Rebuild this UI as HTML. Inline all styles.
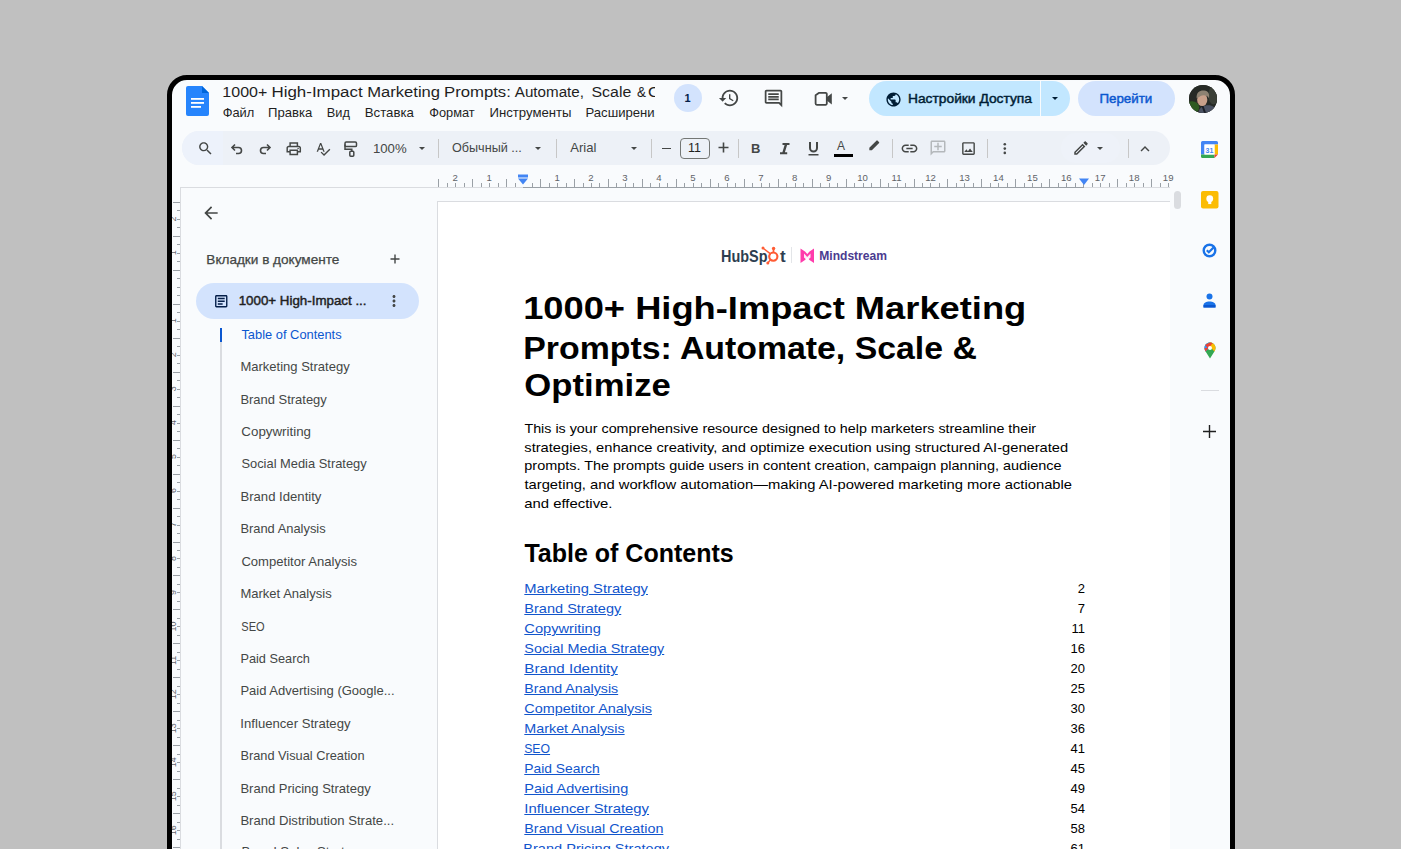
<!DOCTYPE html>
<html><head><meta charset="utf-8">
<style>
*{margin:0;padding:0;box-sizing:border-box}
html,body{width:1401px;height:849px;overflow:hidden;background:#c0c0c0;font-family:"Liberation Sans",sans-serif}
#frame{position:absolute;left:167px;top:75px;width:1068px;height:820px;border:5px solid #000;border-radius:20px;background:#f9fbfd;overflow:hidden}
#in{position:absolute;left:-172px;top:-80px;width:1401px;height:900px}
.a{position:absolute;white-space:nowrap}
.ic{position:absolute;fill:#444746}
.sep{position:absolute;top:139px;width:1px;height:19px;background:#c7c7c7}
.tb{font-size:12.5px;color:#444746;line-height:14px}
.arr{position:absolute;width:0;height:0;border-left:3.5px solid transparent;border-right:3.5px solid transparent;border-top:3.5px solid #444746}
.t{transform-origin:0 0}
#m0{transform:translateX(-0.34px) scaleX(1.0372)}
#m1{transform:translateX(-1.06px) scaleX(1.0599)}
#m2{transform:translateX(-1.25px) scaleX(1.0321)}
#m3{transform:translateX(-1.27px) scaleX(1.0671)}
#m4{transform:translateX(0.26px) scaleX(1.0330)}
#m5{transform:translateX(-1.58px) scaleX(1.0628)}
#share{transform:translateX(0.00px) scaleX(1.0450)}
#go{transform:translateX(-1.61px) scaleX(1.0130)}
#zoom{transform:translateX(-1.08px) scaleX(1.0813)}
#style{transform:translateX(0.00px) scaleX(0.9857)}
#font{transform:translateX(0.25px) scaleX(1.0219)}
#tabs{transform:translateX(-0.66px) scaleX(1.0603)}
#tabname{transform:translateX(-0.36px) scaleX(1.0260)}
#si0{transform:translateX(0.39px) scaleX(0.9767)}
#si1{transform:translateX(-0.61px) scaleX(0.9875)}
#si2{transform:translateX(-0.60px) scaleX(0.9822)}
#si3{transform:translateX(0.36px) scaleX(1.0110)}
#si4{transform:translateX(0.41px) scaleX(0.9766)}
#si5{transform:translateX(-0.57px) scaleX(0.9954)}
#si6{transform:translateX(-0.62px) scaleX(0.9779)}
#si7{transform:translateX(0.38px) scaleX(0.9926)}
#si8{transform:translateX(-0.60px) scaleX(0.9884)}
#si9{transform:translateX(0.35px) scaleX(0.8389)}
#si10{transform:translateX(-0.61px) scaleX(0.9668)}
#si11{transform:translateX(-0.60px) scaleX(0.9873)}
#si12{transform:translateX(-0.63px) scaleX(0.9951)}
#si13{transform:translateX(-0.60px) scaleX(0.9696)}
#si14{transform:translateX(-0.60px) scaleX(0.9873)}
#si15{transform:translateX(-0.62px) scaleX(0.9937)}
#mind{transform:translateX(0.23px) scaleX(0.9283)}
#h1_0{transform:translateX(-1.85px) scaleX(1.1519)}
#h1_1{transform:translateX(-1.72px) scaleX(1.0738)}
#h1_2{transform:translateX(-0.66px) scaleX(1.1017)}
#p_0{transform:translateX(0.44px) scaleX(1.0996)}
#p_1{transform:translateX(0.32px) scaleX(1.1289)}
#p_2{transform:translateX(0.33px) scaleX(1.1100)}
#p_3{transform:translateX(0.45px) scaleX(1.1344)}
#p_4{transform:translateX(0.27px) scaleX(1.1445)}
#h2{transform:translateX(0.40px) scaleX(1.0048)}
#toc_0{transform:translateX(0.33px) scaleX(1.1329)}
#toc_1{transform:translateX(0.32px) scaleX(1.1177)}
#toc_2{transform:translateX(0.32px) scaleX(1.1271)}
#toc_3{transform:translateX(0.31px) scaleX(1.1066)}
#toc_4{transform:translateX(0.33px) scaleX(1.1649)}
#toc_5{transform:translateX(0.30px) scaleX(1.0915)}
#toc_6{transform:translateX(0.32px) scaleX(1.1106)}
#toc_7{transform:translateX(0.32px) scaleX(1.1016)}
#toc_8{transform:translateX(0.20px) scaleX(0.9420)}
#toc_9{transform:translateX(0.29px) scaleX(1.0642)}
#toc_10{transform:translateX(0.32px) scaleX(1.1143)}
#toc_11{transform:translateX(0.33px) scaleX(1.1429)}
#toc_12{transform:translateX(0.32px) scaleX(1.1017)}
#toc_13{transform:translateX(-0.80px) scaleX(1.1218)}
#m6{transform:translateX(-1.54px) scaleX(1.0594)}
#tw0{transform:translateX(-0.65px) scaleX(1.0456)}
#tw1{transform:translateX(-1.53px) scaleX(1.1054)}
#tw2{transform:translateX(-0.81px) scaleX(1.0853)}
#tw3{transform:translateX(-1.02px) scaleX(1.0928)}
#tw4{transform:translateX(-0.20px) scaleX(0.9920)}
#tw5{transform:translateX(-1.48px) scaleX(1.0392)}
#tw6{transform:translateX(0.00px) scaleX(0.8804)}
#tw7{transform:translateX(0.00px) scaleX(1.0760)}
</style></head><body>
<div id="frame"><div id="in">

<!-- ============ HEADER ============ -->
<svg class="a" style="left:186px;top:86px" width="23" height="30" viewBox="0 0 23 30">
  <path d="M2 0H16L23 7V28a2 2 0 0 1-2 2H2a2 2 0 0 1-2-2V2a2 2 0 0 1 2-2z" fill="#2684fc"/>
  <path d="M16 0L23 7H16z" fill="#0066da"/>
  <rect x="5" y="12" width="13" height="1.8" fill="#fff"/>
  <rect x="5" y="16" width="13" height="1.8" fill="#fff"/>
  <rect x="5" y="20" width="10" height="1.8" fill="#fff"/>
</svg>

<div class="a" style="left:673.5px;top:84px;width:28px;height:28px;border-radius:50%;background:#d3e3fd;color:#041e49;font-size:11px;font-weight:bold;text-align:center;line-height:28px">1</div>
<svg class="ic" style="left:718px;top:87px" width="22" height="22" viewBox="0 0 24 24"><path d="M13 3c-4.97 0-9 4.03-9 9H1l3.89 3.89.07.14L9 12H6c0-3.87 3.13-7 7-7s7 3.13 7 7-3.13 7-7 7c-1.930 0-3.68-.79-4.94-2.06l-1.42 1.42C8.27 19.99 10.51 21 13 21c4.97 0 9-4.03 9-9s-4.03-9-9-9zm-1 5v5l4.28 2.54.72-1.21-3.5-2.08V8H12z"/></svg>
<svg class="ic" style="left:763px;top:88px" width="21" height="21" viewBox="0 0 24 24"><path d="M20 2H4c-1.1 0-2 .9-2 2v12c0 1.1.9 2 2 2h14l4 4V4c0-1.1-.9-2-2-2zm0 15.17L18.83 16H4V4h16v13.17zM6 12h12v2H6zm0-3h12v2H6zm0-3h12v2H6z"/></svg>
<svg class="a" style="left:810px;top:88px" width="26" height="22" viewBox="810 88 26 22"><path d="M815.6 95.2L818.8 92.9H825.6a1.2 1.2 0 0 1 1.2 1.2V103.6a1.2 1.2 0 0 1-1.2 1.2H816.8a1.2 1.2 0 0 1-1.2-1.2z" fill="none" stroke="#444746" stroke-width="1.8" stroke-linejoin="round"/><path d="M826.8 97.2L831.8 93.2V104.4L826.8 100.4z" fill="#444746"/></svg>
<div class="arr" style="left:841.5px;top:97px"></div>

<div class="a" style="left:869px;top:81px;width:201px;height:35px;border-radius:17.5px;background:#c2e7ff"></div>
<div class="a" style="left:1040px;top:81px;width:1px;height:35px;background:#f9fbfd"></div>
<svg class="ic" style="left:884.5px;top:90.5px;fill:#001d35" width="17" height="17" viewBox="0 0 24 24"><path d="M12 2C6.48 2 2 6.48 2 12s4.48 10 10 10 10-4.48 10-10S17.52 2 12 2zm-1 17.93c-3.95-.49-7-3.85-7-7.93 0-.62.08-1.21.21-1.79L9 15v1c0 1.1.9 2 2 2v1.93zm6.9-2.54c-.26-.81-1-1.39-1.9-1.39h-1v-3c0-.55-.45-1-1-1H8v-2h2c.55 0 1-.45 1-1V7h2c1.1 0 2-.9 2-2v-.41c2.93 1.19 5 4.06 5 7.41 0 2.08-.8 3.97-2.1 5.39z"/></svg>
<div class="arr" style="left:1051.5px;top:97px;border-top-color:#001d35"></div>

<div class="a" style="left:1078px;top:81px;width:97px;height:35px;border-radius:17.5px;background:#d3e3fd"></div>

<div class="a" style="left:1188.5px;top:84.5px;width:28.5px;height:28.5px;border-radius:50%;overflow:hidden;background:#2b2f2b">
<svg width="28.5" height="28.5" viewBox="0 0 28 28" style="display:block">
  <rect width="28" height="28" fill="#262a26"/>
  <ellipse cx="3" cy="22" rx="7" ry="6" fill="#2e5a22"/>
  <ellipse cx="24" cy="10" rx="5" ry="9" fill="#3b4038"/>
  <path d="M9 28 C10 22 14 20 19 20 C24 20 27 23 28 28z" fill="#4b5263"/>
  <path d="M12 20 L15 28 L17 28 L14 20z" fill="#1c1f26"/>
  <ellipse cx="13" cy="14.5" rx="5" ry="6.2" fill="#c8a08a"/>
  <path d="M7.5 13 C7 7 11 5 15 5.5 C19 6 20.5 9 19.5 13 C18 10 14 9.5 11 11 C9.5 12 8.5 12.5 7.5 13z" fill="#8d8272"/>
  <path d="M7.6 16.5 l1.2 0.4 -0.8 0.8z" fill="#a05050"/>
</svg></div>

<!-- ============ TOOLBAR ============ -->
<div class="a" style="left:182px;top:130.5px;width:988px;height:34.5px;border-radius:17.5px;background:#edf1f7"></div>
<div class="a" style="left:182px;top:130.5px;width:41px;height:34.5px;border-radius:17.5px 0 0 17.5px;background:#edf2fb"></div>


<svg class="ic" style="left:197px;top:140px" width="17" height="17" viewBox="0 0 24 24"><path d="M15.5 14h-.79l-.28-.27C15.41 12.59 16 11.11 16 9.5 16 5.91 13.09 3 9.5 3S3 5.91 3 9.5 5.91 16 9.5 16c1.61 0 3.09-.59 4.23-1.57l.27.28v.79l5 4.99L20.49 19l-4.99-5zm-6 0C7.01 14 5 11.99 5 9.5S7.01 5 9.5 5 14 7.01 14 9.5 11.99 14 9.5 14z"/></svg>
<svg class="ic" style="left:229px;top:140px;fill:none;stroke:#444746;stroke-width:1.6" width="16" height="16" viewBox="0 0 16 16"><path d="M6 4.5L3 7.5L6 10.5M3 7.5H9.5a3 3 0 0 1 0 6H7"/></svg>
<svg class="ic" style="left:257px;top:140px;fill:none;stroke:#444746;stroke-width:1.6" width="16" height="16" viewBox="0 0 16 16"><path d="M10 4.5L13 7.5L10 10.5M13 7.5H6.5a3 3 0 0 0 0 6H9"/></svg>
<svg class="ic" style="left:285px;top:140px" width="17.5" height="17.5" viewBox="0 0 24 24"><path d="M19 8h-1V3H6v5H5c-1.66 0-3 1.34-3 3v6h4v4h12v-4h4v-6c0-1.66-1.34-3-3-3zM8 5h8v3H8V5zm8 12v2H8v-4h8v2zm2-2v-2H6v2H4v-4c0-.55.45-1 1-1h14c.55 0 1 .45 1 1v4h-2z"/><circle cx="18" cy="11.5" r="1"/></svg>
<svg class="ic" style="left:314.5px;top:140.5px" width="16" height="16" viewBox="0 0 24 24"><path d="M12.45 16h2.09L9.43 3H7.57L2.46 16h2.09l1.12-3h5.64l1.14 3zm-6.02-5L8.5 5.48 10.57 11H6.43zm15.16.59l-8.09 8.09L9.83 16l-1.41 1.41 5.09 5.09L23 13l-1.41-1.41z"/></svg>
<svg class="ic" style="left:340px;top:138px;fill:none;stroke:#444746;stroke-width:1.5" width="20" height="20" viewBox="340 138 20 20"><rect x="345" y="142" width="11.5" height="4.6" rx="1.2"/><path d="M345 144.5V149.2H351.8V151"/><rect x="349.8" y="151.2" width="4" height="5" rx="1"/></svg>
<div class="arr" style="left:418.5px;top:147px"></div>
<div class="sep" style="left:438px"></div>
<div class="arr" style="left:534.5px;top:147px"></div>
<div class="sep" style="left:555.5px"></div>
<div class="arr" style="left:630.5px;top:147px"></div>
<div class="sep" style="left:651px"></div>
<div class="a" style="left:661.5px;top:147.5px;width:9px;height:1.6px;background:#444746"></div>
<div class="a tb" style="left:679.5px;top:137.5px;width:30px;height:21px;border:1px solid #747775;border-radius:4px;text-align:center;line-height:19px;color:#1f1f1f">11</div>
<svg class="ic" style="left:717px;top:141px" width="13" height="13" viewBox="0 0 13 13"><path d="M5.7 1.5h1.6v4.2h4.2v1.6H7.3v4.2H5.7V7.3H1.5V5.7h4.2z"/></svg>
<div class="sep" style="left:738px"></div>
<div class="a" style="left:751px;top:141px;font-size:13px;line-height:15px;font-weight:bold;color:#444746">B</div>
<svg class="ic" style="left:778px;top:140px" width="13" height="17" viewBox="0 0 13 17"><path d="M4.5 3h7v2h-2.4l-2.2 7.2h2.3v2H2v-2h2.4L6.6 5H4.5z"/></svg>
<svg class="ic" style="left:806px;top:139px" width="15" height="19" viewBox="0 0 15 19"><path d="M3 3h2v6a2.5 2.5 0 0 0 5 0V3h2v6a4.5 4.5 0 0 1-9 0z M2.5 15h10v1.4h-10z"/></svg>
<div class="a" style="left:837px;top:139px;font-size:12px;line-height:14px;color:#444746">A</div>
<div class="a" style="left:833.5px;top:153.5px;width:19px;height:3px;background:#000"></div>
<svg class="ic" style="left:866px;top:139px" width="16" height="16" viewBox="0 0 24 24"><path d="M14.06 4.19l3.75 3.75L8.75 17H5v-3.75zM15.88 2.37c.39-.39 1.02-.39 1.41 0l2.34 2.34c.39.39.39 1.02 0 1.41l-1.83 1.83-3.75-3.75z"/></svg>
<div class="sep" style="left:892px"></div>
<svg class="ic" style="left:900px;top:139px" width="19" height="19" viewBox="0 0 24 24"><path d="M3.9 12c0-1.71 1.39-3.1 3.1-3.1h4V7H7c-2.76 0-5 2.24-5 5s2.24 5 5 5h4v-1.9H7c-1.71 0-3.1-1.39-3.1-3.1zM8 13h8v-2H8v2zm9-6h-4v1.9h4c1.71 0 3.1 1.39 3.1 3.1s-1.39 3.1-3.1 3.1h-4V17h4c2.76 0 5-2.24 5-5s-2.24-5-5-5z"/></svg>
<svg class="ic" style="left:929px;top:139px;fill:#b4b8bb;transform:scaleX(-1)" width="18" height="18" viewBox="0 0 24 24"><path d="M22 4c0-1.1-.9-2-2-2H4c-1.1 0-1.99.9-1.99 2L2 16c0 1.1.9 2 2 2h14l4 4V4zm-2 13.17L18.83 16H4V4h16v13.17zM13 5h-2v4H7v2h4v4h2v-4h4V9h-4z"/></svg>
<svg class="ic" style="left:959.5px;top:139.5px" width="17" height="17" viewBox="0 0 24 24"><path d="M19 5v14H5V5h14m0-2H5c-1.1 0-2 .9-2 2v14c0 1.1.9 2 2 2h14c1.1 0 2-.9 2-2V5c0-1.1-.9-2-2-2zm-4.86 8.86l-3 3.87L9 13.14 6 17h12l-3.86-5.14z"/></svg>
<div class="sep" style="left:986.5px"></div>
<svg class="ic" style="left:1000px;top:140px" width="10" height="17" viewBox="0 0 10 17"><circle cx="4.8" cy="4.3" r="1.3"/><circle cx="4.8" cy="8.6" r="1.3"/><circle cx="4.8" cy="12.9" r="1.3"/></svg>
<div class="a" style="left:1061px;top:133px;width:59px;height:30px;border-radius:15px;background:#eef2f9"></div>
<svg class="ic" style="left:1072px;top:138.5px" width="18" height="18" viewBox="0 0 24 24"><path d="M3 17.25V21h3.75L17.81 9.94l-3.75-3.75L3 17.25zM5.92 19H5v-.92l9.06-9.06.92.92L5.92 19zM20.71 5.630l-2.34-2.34c-.2-.2-.45-.29-.71-.29s-.51.1-.7.29l-1.83 1.83 3.75 3.75 1.83-1.83c.39-.39.39-1.02 0-1.41z"/></svg>
<div class="arr" style="left:1096.5px;top:147px"></div>
<div class="sep" style="left:1127.5px"></div>
<svg class="ic" style="left:1136px;top:140px" width="18" height="18" viewBox="0 0 24 24"><path d="M12 8l-6 6 1.41 1.41L12 10.83l4.59 4.58L18 14z"/></svg>

<!-- ============ RULER ============ -->
<div class="a" style="left:180px;top:186.5px;width:990px;height:1px;background:#dadce0"></div>
<div class="a" style="left:523px;top:186.5px;width:561px;height:1px;background:#9aa0a6"></div>
<div class="a" style="left:180px;top:186.5px;width:1px;height:700px;background:#dadce0"></div>
<svg class="a" id="hruler" style="left:0;top:168px" width="1401" height="20"><g stroke="#9aa0a6" stroke-width="1"><line x1="438.5" y1="11" x2="438.5" y2="19"/><line x1="447.5" y1="15" x2="447.5" y2="19"/><line x1="455.5" y1="15" x2="455.5" y2="19"/><line x1="464.5" y1="15" x2="464.5" y2="19"/><line x1="472.5" y1="11" x2="472.5" y2="19"/><line x1="481.5" y1="15" x2="481.5" y2="19"/><line x1="489.5" y1="15" x2="489.5" y2="19"/><line x1="498.5" y1="15" x2="498.5" y2="19"/><line x1="506.5" y1="11" x2="506.5" y2="19"/><line x1="515.5" y1="15" x2="515.5" y2="19"/><line x1="532.5" y1="15" x2="532.5" y2="19"/><line x1="540.5" y1="11" x2="540.5" y2="19"/><line x1="549.5" y1="15" x2="549.5" y2="19"/><line x1="557.5" y1="15" x2="557.5" y2="19"/><line x1="566.5" y1="15" x2="566.5" y2="19"/><line x1="574.5" y1="11" x2="574.5" y2="19"/><line x1="583.5" y1="15" x2="583.5" y2="19"/><line x1="591.5" y1="15" x2="591.5" y2="19"/><line x1="599.5" y1="15" x2="599.5" y2="19"/><line x1="608.5" y1="11" x2="608.5" y2="19"/><line x1="616.5" y1="15" x2="616.5" y2="19"/><line x1="625.5" y1="15" x2="625.5" y2="19"/><line x1="633.5" y1="15" x2="633.5" y2="19"/><line x1="642.5" y1="11" x2="642.5" y2="19"/><line x1="650.5" y1="15" x2="650.5" y2="19"/><line x1="659.5" y1="15" x2="659.5" y2="19"/><line x1="667.5" y1="15" x2="667.5" y2="19"/><line x1="676.5" y1="11" x2="676.5" y2="19"/><line x1="684.5" y1="15" x2="684.5" y2="19"/><line x1="693.5" y1="15" x2="693.5" y2="19"/><line x1="701.5" y1="15" x2="701.5" y2="19"/><line x1="710.5" y1="11" x2="710.5" y2="19"/><line x1="718.5" y1="15" x2="718.5" y2="19"/><line x1="727.5" y1="15" x2="727.5" y2="19"/><line x1="735.5" y1="15" x2="735.5" y2="19"/><line x1="744.5" y1="11" x2="744.5" y2="19"/><line x1="752.5" y1="15" x2="752.5" y2="19"/><line x1="761.5" y1="15" x2="761.5" y2="19"/><line x1="769.5" y1="15" x2="769.5" y2="19"/><line x1="778.5" y1="11" x2="778.5" y2="19"/><line x1="786.5" y1="15" x2="786.5" y2="19"/><line x1="795.5" y1="15" x2="795.5" y2="19"/><line x1="803.5" y1="15" x2="803.5" y2="19"/><line x1="812.5" y1="11" x2="812.5" y2="19"/><line x1="820.5" y1="15" x2="820.5" y2="19"/><line x1="829.5" y1="15" x2="829.5" y2="19"/><line x1="837.5" y1="15" x2="837.5" y2="19"/><line x1="846.5" y1="11" x2="846.5" y2="19"/><line x1="854.5" y1="15" x2="854.5" y2="19"/><line x1="863.5" y1="15" x2="863.5" y2="19"/><line x1="871.5" y1="15" x2="871.5" y2="19"/><line x1="880.5" y1="11" x2="880.5" y2="19"/><line x1="888.5" y1="15" x2="888.5" y2="19"/><line x1="897.5" y1="15" x2="897.5" y2="19"/><line x1="905.5" y1="15" x2="905.5" y2="19"/><line x1="914.5" y1="11" x2="914.5" y2="19"/><line x1="922.5" y1="15" x2="922.5" y2="19"/><line x1="930.5" y1="15" x2="930.5" y2="19"/><line x1="939.5" y1="15" x2="939.5" y2="19"/><line x1="947.5" y1="11" x2="947.5" y2="19"/><line x1="956.5" y1="15" x2="956.5" y2="19"/><line x1="964.5" y1="15" x2="964.5" y2="19"/><line x1="973.5" y1="15" x2="973.5" y2="19"/><line x1="981.5" y1="11" x2="981.5" y2="19"/><line x1="990.5" y1="15" x2="990.5" y2="19"/><line x1="998.5" y1="15" x2="998.5" y2="19"/><line x1="1007.5" y1="15" x2="1007.5" y2="19"/><line x1="1015.5" y1="11" x2="1015.5" y2="19"/><line x1="1024.5" y1="15" x2="1024.5" y2="19"/><line x1="1032.5" y1="15" x2="1032.5" y2="19"/><line x1="1041.5" y1="15" x2="1041.5" y2="19"/><line x1="1049.5" y1="11" x2="1049.5" y2="19"/><line x1="1058.5" y1="15" x2="1058.5" y2="19"/><line x1="1066.5" y1="15" x2="1066.5" y2="19"/><line x1="1075.5" y1="15" x2="1075.5" y2="19"/><line x1="1083.5" y1="11" x2="1083.5" y2="19"/><line x1="1092.5" y1="15" x2="1092.5" y2="19"/><line x1="1100.5" y1="15" x2="1100.5" y2="19"/><line x1="1109.5" y1="15" x2="1109.5" y2="19"/><line x1="1117.5" y1="11" x2="1117.5" y2="19"/><line x1="1126.5" y1="15" x2="1126.5" y2="19"/><line x1="1134.5" y1="15" x2="1134.5" y2="19"/><line x1="1143.5" y1="15" x2="1143.5" y2="19"/><line x1="1151.5" y1="11" x2="1151.5" y2="19"/><line x1="1160.5" y1="15" x2="1160.5" y2="19"/><line x1="1168.5" y1="15" x2="1168.5" y2="19"/></g><g fill="#5f6368" font-size="9.6" font-family="Liberation Sans"><text x="455.2" y="13" text-anchor="middle">2</text><text x="489.2" y="13" text-anchor="middle">1</text><text x="557.1" y="13" text-anchor="middle">1</text><text x="591.0" y="13" text-anchor="middle">2</text><text x="625.0" y="13" text-anchor="middle">3</text><text x="658.9" y="13" text-anchor="middle">4</text><text x="692.9" y="13" text-anchor="middle">5</text><text x="726.8" y="13" text-anchor="middle">6</text><text x="760.8" y="13" text-anchor="middle">7</text><text x="794.7" y="13" text-anchor="middle">8</text><text x="828.7" y="13" text-anchor="middle">9</text><text x="862.6" y="13" text-anchor="middle">10</text><text x="896.6" y="13" text-anchor="middle">11</text><text x="930.5" y="13" text-anchor="middle">12</text><text x="964.5" y="13" text-anchor="middle">13</text><text x="998.4" y="13" text-anchor="middle">14</text><text x="1032.4" y="13" text-anchor="middle">15</text><text x="1066.3" y="13" text-anchor="middle">16</text><text x="1100.2" y="13" text-anchor="middle">17</text><text x="1134.2" y="13" text-anchor="middle">18</text><text x="1168.2" y="13" text-anchor="middle">19</text></g></svg>
<svg class="a" id="vruler" style="left:168px;top:180px" width="13" height="700"><g stroke="#9aa0a6" stroke-width="1"><line x1="5" y1="22.5" x2="12" y2="22.5"/><line x1="9" y1="30.5" x2="12" y2="30.5"/><line x1="9" y1="39.5" x2="12" y2="39.5"/><line x1="9" y1="47.5" x2="12" y2="47.5"/><line x1="5" y1="56.5" x2="12" y2="56.5"/><line x1="9" y1="64.5" x2="12" y2="64.5"/><line x1="9" y1="73.5" x2="12" y2="73.5"/><line x1="9" y1="81.5" x2="12" y2="81.5"/><line x1="5" y1="90.5" x2="12" y2="90.5"/><line x1="9" y1="98.5" x2="12" y2="98.5"/><line x1="9" y1="107.5" x2="12" y2="107.5"/><line x1="9" y1="115.5" x2="12" y2="115.5"/><line x1="5" y1="124.5" x2="12" y2="124.5"/><line x1="9" y1="132.5" x2="12" y2="132.5"/><line x1="9" y1="141.5" x2="12" y2="141.5"/><line x1="9" y1="149.5" x2="12" y2="149.5"/><line x1="5" y1="158.5" x2="12" y2="158.5"/><line x1="9" y1="166.5" x2="12" y2="166.5"/><line x1="9" y1="175.5" x2="12" y2="175.5"/><line x1="9" y1="183.5" x2="12" y2="183.5"/><line x1="5" y1="192.5" x2="12" y2="192.5"/><line x1="9" y1="200.5" x2="12" y2="200.5"/><line x1="9" y1="209.5" x2="12" y2="209.5"/><line x1="9" y1="217.5" x2="12" y2="217.5"/><line x1="5" y1="226.5" x2="12" y2="226.5"/><line x1="9" y1="234.5" x2="12" y2="234.5"/><line x1="9" y1="243.5" x2="12" y2="243.5"/><line x1="9" y1="251.5" x2="12" y2="251.5"/><line x1="5" y1="260.5" x2="12" y2="260.5"/><line x1="9" y1="268.5" x2="12" y2="268.5"/><line x1="9" y1="277.5" x2="12" y2="277.5"/><line x1="9" y1="285.5" x2="12" y2="285.5"/><line x1="5" y1="294.5" x2="12" y2="294.5"/><line x1="9" y1="302.5" x2="12" y2="302.5"/><line x1="9" y1="311.5" x2="12" y2="311.5"/><line x1="9" y1="319.5" x2="12" y2="319.5"/><line x1="5" y1="328.5" x2="12" y2="328.5"/><line x1="9" y1="336.5" x2="12" y2="336.5"/><line x1="9" y1="345.5" x2="12" y2="345.5"/><line x1="9" y1="353.5" x2="12" y2="353.5"/><line x1="5" y1="362.5" x2="12" y2="362.5"/><line x1="9" y1="370.5" x2="12" y2="370.5"/><line x1="9" y1="378.5" x2="12" y2="378.5"/><line x1="9" y1="387.5" x2="12" y2="387.5"/><line x1="5" y1="395.5" x2="12" y2="395.5"/><line x1="9" y1="404.5" x2="12" y2="404.5"/><line x1="9" y1="412.5" x2="12" y2="412.5"/><line x1="9" y1="421.5" x2="12" y2="421.5"/><line x1="5" y1="429.5" x2="12" y2="429.5"/><line x1="9" y1="438.5" x2="12" y2="438.5"/><line x1="9" y1="446.5" x2="12" y2="446.5"/><line x1="9" y1="455.5" x2="12" y2="455.5"/><line x1="5" y1="463.5" x2="12" y2="463.5"/><line x1="9" y1="472.5" x2="12" y2="472.5"/><line x1="9" y1="480.5" x2="12" y2="480.5"/><line x1="9" y1="489.5" x2="12" y2="489.5"/><line x1="5" y1="497.5" x2="12" y2="497.5"/><line x1="9" y1="506.5" x2="12" y2="506.5"/><line x1="9" y1="514.5" x2="12" y2="514.5"/><line x1="9" y1="523.5" x2="12" y2="523.5"/><line x1="5" y1="531.5" x2="12" y2="531.5"/><line x1="9" y1="540.5" x2="12" y2="540.5"/><line x1="9" y1="548.5" x2="12" y2="548.5"/><line x1="9" y1="557.5" x2="12" y2="557.5"/><line x1="5" y1="565.5" x2="12" y2="565.5"/><line x1="9" y1="574.5" x2="12" y2="574.5"/><line x1="9" y1="582.5" x2="12" y2="582.5"/><line x1="9" y1="591.5" x2="12" y2="591.5"/><line x1="5" y1="599.5" x2="12" y2="599.5"/><line x1="9" y1="608.5" x2="12" y2="608.5"/><line x1="9" y1="616.5" x2="12" y2="616.5"/><line x1="9" y1="625.5" x2="12" y2="625.5"/><line x1="5" y1="633.5" x2="12" y2="633.5"/><line x1="9" y1="642.5" x2="12" y2="642.5"/><line x1="9" y1="650.5" x2="12" y2="650.5"/><line x1="9" y1="659.5" x2="12" y2="659.5"/><line x1="5" y1="667.5" x2="12" y2="667.5"/><line x1="9" y1="676.5" x2="12" y2="676.5"/><line x1="9" y1="684.5" x2="12" y2="684.5"/><line x1="9" y1="693.5" x2="12" y2="693.5"/></g><g fill="#5f6368" font-size="9" font-family="Liberation Sans"><text transform="translate(7.5,38.9) rotate(-90)" text-anchor="middle">2</text><text transform="translate(7.5,72.8) rotate(-90)" text-anchor="middle">1</text><text transform="translate(7.5,140.8) rotate(-90)" text-anchor="middle">1</text><text transform="translate(7.5,174.7) rotate(-90)" text-anchor="middle">2</text><text transform="translate(7.5,208.7) rotate(-90)" text-anchor="middle">3</text><text transform="translate(7.5,242.6) rotate(-90)" text-anchor="middle">4</text><text transform="translate(7.5,276.6) rotate(-90)" text-anchor="middle">5</text><text transform="translate(7.5,310.6) rotate(-90)" text-anchor="middle">6</text><text transform="translate(7.5,344.5) rotate(-90)" text-anchor="middle">7</text><text transform="translate(7.5,378.5) rotate(-90)" text-anchor="middle">8</text><text transform="translate(7.5,412.4) rotate(-90)" text-anchor="middle">9</text><text transform="translate(7.5,446.4) rotate(-90)" text-anchor="middle">10</text><text transform="translate(7.5,480.4) rotate(-90)" text-anchor="middle">11</text><text transform="translate(7.5,514.3) rotate(-90)" text-anchor="middle">12</text><text transform="translate(7.5,548.3) rotate(-90)" text-anchor="middle">13</text><text transform="translate(7.5,582.2) rotate(-90)" text-anchor="middle">14</text><text transform="translate(7.5,616.2) rotate(-90)" text-anchor="middle">15</text><text transform="translate(7.5,650.2) rotate(-90)" text-anchor="middle">16</text><text transform="translate(7.5,684.1) rotate(-90)" text-anchor="middle">17</text></g></svg>
<svg class="a" style="left:517px;top:174px" width="12" height="11" viewBox="0 0 12 11"><rect x="1" y="0.5" width="10" height="3" fill="#4285f4"/><path d="M1 4.5h10L6 10.5z" fill="#4285f4"/></svg>
<svg class="a" style="left:1078px;top:178px" width="12" height="8" viewBox="0 0 12 8"><path d="M1 0.5h10L6 7z" fill="#4285f4"/></svg>


<!-- ============ PAGE ============ -->
<div class="a" style="left:437px;top:201px;width:733px;height:800px;background:#fff;border-left:1px solid #dadce0;border-top:1px solid #dadce0"></div>
<!-- scrollbar -->
<div class="a" style="left:1174px;top:191px;width:7px;height:18px;border-radius:3.5px;background:#dadce0"></div>

<!-- ============ SIDEBAR ============ -->
<div class="a" style="left:181px;top:187.5px;width:256px;height:700px;background:#f9fbfd"></div>
<svg class="ic" style="left:201px;top:202.5px" width="20" height="20" viewBox="0 0 24 24"><path d="M20 11H7.83l5.59-5.59L12 4l-8 8 8 8 1.41-1.41L7.83 13H20v-2z"/></svg>
<svg class="ic" style="left:389.5px;top:254px;fill:#444746" width="10" height="10" viewBox="0 0 10 10"><path d="M4.3 0.5h1.4v3.8h3.8v1.4H5.7v3.8H4.3V5.7H0.5V4.3h3.8z"/></svg>
<div class="a" style="left:195.5px;top:282.5px;width:223.5px;height:36px;border-radius:18px;background:#d3e3fd"></div>
<svg class="ic" style="left:212.5px;top:292.5px;fill:#041e49" width="16.5" height="16.5" viewBox="0 0 24 24"><path d="M19 3H5c-1.1 0-2 .9-2 2v14c0 1.1.9 2 2 2h14c1.1 0 2-.9 2-2V5c0-1.1-.9-2-2-2zm0 16H5V5h14v14zM7 7h10v2H7zm0 4h10v2H7zm0 4h7v2H7z"/></svg>
<svg class="ic" style="left:385px;top:292px;fill:#444746" width="18" height="18" viewBox="0 0 24 24"><path d="M12 8c1.1 0 2-.9 2-2s-.9-2-2-2-2 .9-2 2 .9 2 2 2zm0 2c-1.1 0-2 .9-2 2s.9 2 2 2 2-.9 2-2-.9-2-2-2zm0 6c-1.1 0-2 .9-2 2s.9 2 2 2 2-.9 2-2-.9-2-2-2z"/></svg>
<div class="a" style="left:220px;top:327.5px;width:2px;height:14.5px;background:#0b57d0"></div>
<div class="a" style="left:220px;top:342px;width:1.5px;height:600px;background:#dadce0"></div>

<!-- ============ RIGHT PANEL ============ -->
<svg class="a" style="left:1201px;top:141px" width="17" height="17" viewBox="0 0 17 17">
  <path d="M1.5 0H15.5A1.5 1.5 0 0 1 17 1.5V3.5H3.5V13.5H0V1.5A1.5 1.5 0 0 1 1.5 0z" fill="#4285f4"/>
  <rect x="13.5" y="3.5" width="3.5" height="10" fill="#fbbc04"/>
  <path d="M0 13.5H13.5V17H1.5A1.5 1.5 0 0 1 0 15.5z" fill="#34a853"/>
  <path d="M13.5 13.5H17L13.5 17z" fill="#ea4335"/>
  <rect x="3.5" y="3.5" width="10" height="10" fill="#fff"/>
  <text x="8.5" y="11.6" text-anchor="middle" font-size="7" font-weight="bold" fill="#4285f4" font-family="Liberation Sans">31</text>
</svg>
<svg class="a" style="left:1201px;top:191px" width="17.5" height="17.5" viewBox="0 0 17 17">
  <rect x="0" y="0" width="17" height="17" rx="2" fill="#fbbc04"/>
  <circle cx="8.5" cy="7.5" r="3.3" fill="#fff"/>
  <rect x="7" y="10.5" width="3" height="2.2" fill="#fff"/>
</svg>
<svg class="a" style="left:1201.5px;top:242px" width="16" height="16" viewBox="0 0 16 16">
  <circle cx="7.5" cy="8.5" r="5.8" fill="none" stroke="#1a73e8" stroke-width="2.4"/>
  <path d="M4.8 8.3l2 2 5.5-5.6" fill="none" stroke="#1a73e8" stroke-width="2.2"/>
  <path d="M11 1.5l3.5 3.5" stroke="#f9fbfd" stroke-width="0"/>
</svg>
<svg class="a" style="left:1203px;top:293px" width="13" height="15" viewBox="0 0 13 15">
  <circle cx="6.5" cy="3.6" r="3" fill="#1a73e8"/>
  <path d="M0.5 14.5v-2.5c0-2.2 2.8-3.6 6-3.6s6 1.4 6 3.6v2.5z" fill="#1a73e8"/>
  <path d="M0.5 12h12v2.5h-12z" fill="#0b57d0"/>
</svg>
<svg class="a" style="left:1203.5px;top:342px" width="12" height="17" viewBox="0 0 12 17">
  <path d="M6 0.5C2.9 0.5 0.5 2.9 0.5 6c0 1.3.4 2.4 1.1 3.4L6 16.5l4.4-7.1c.7-1 1.1-2.1 1.1-3.4C11.5 2.9 9.1 0.5 6 0.5z" fill="#34a853"/>
  <path d="M6 0.5C2.9 0.5 0.5 2.9 0.5 6c0 1.3.4 2.4 1.1 3.4L8.2 3.1 6 .5z" fill="#4285f4"/>
  <path d="M0.5 6c0 1.3.4 2.4 1.1 3.4l3-3.5z" fill="#ea4335"/>
  <path d="M6 0.5c3.1 0 5.5 2.4 5.5 5.5 0 1.3-.4 2.4-1.1 3.4L3.5 2z" fill="#fbbc04"/>
  <path d="M1.2 2.8L6 0.5 8.8 1.1 4 6.7z" fill="#ea4335"/>
  <circle cx="6" cy="6" r="2" fill="#fff"/>
</svg>
<div class="a" style="left:1201px;top:390px;width:18px;height:1px;background:#dadce0"></div>
<svg class="ic" style="left:1203px;top:425px;fill:#1f1f1f" width="13" height="13" viewBox="0 0 13 13"><path d="M5.8 0h1.4v5.8H13v1.4H7.2V13H5.8V7.2H0V5.8h5.8z"/></svg>
<div class="a" style="left:215px;top:80px;width:440px;height:45px;overflow:hidden">
<div style="position:absolute;left:-215px;top:-80px;width:1000px;height:200px">
<div class="a t" id="tw0" style="left:222.8px;top:84.25px;font-size:15.3px;line-height:15.3px;color:#1f1f1f;">1000+</div>
<div class="a t" id="tw1" style="left:272.5px;top:84.25px;font-size:15.3px;line-height:15.3px;color:#1f1f1f;">High-Impact</div>
<div class="a t" id="tw2" style="left:368.4px;top:84.25px;font-size:15.3px;line-height:15.3px;color:#1f1f1f;">Marketing</div>
<div class="a t" id="tw3" style="left:445px;top:84.25px;font-size:15.3px;line-height:15.3px;color:#1f1f1f;">Prompts:</div>
<div class="a t" id="tw4" style="left:514.6px;top:84.25px;font-size:15.3px;line-height:15.3px;color:#1f1f1f;">Automate,</div>
<div class="a t" id="tw5" style="left:592.5px;top:84.25px;font-size:15.3px;line-height:15.3px;color:#1f1f1f;">Scale</div>
<div class="a t" id="tw6" style="left:637px;top:84.25px;font-size:15.3px;line-height:15.3px;color:#1f1f1f;">&amp;</div>
<div class="a t" id="tw7" style="left:648px;top:84.25px;font-size:15.3px;line-height:15.3px;color:#1f1f1f;">Optimize</div>
<div class="a t" id="m0" style="left:222.8px;top:107.00px;font-size:12.4px;line-height:12.4px;color:#1f1f1f;">Файл</div>
<div class="a t" id="m1" style="left:269px;top:107.00px;font-size:12.4px;line-height:12.4px;color:#1f1f1f;">Правка</div>
<div class="a t" id="m2" style="left:327.8px;top:107.00px;font-size:12.4px;line-height:12.4px;color:#1f1f1f;">Вид</div>
<div class="a t" id="m3" style="left:365.8px;top:107.00px;font-size:12.4px;line-height:12.4px;color:#1f1f1f;">Вставка</div>
<div class="a t" id="m4" style="left:429.3px;top:107.00px;font-size:12.4px;line-height:12.4px;color:#1f1f1f;">Формат</div>
<div class="a t" id="m5" style="left:490.5px;top:107.00px;font-size:12.4px;line-height:12.4px;color:#1f1f1f;">Инструменты</div>
<div class="a t" id="m6" style="left:587px;top:107.00px;font-size:12.4px;line-height:12.4px;color:#1f1f1f;">Расширения</div>
</div></div>
<div class="a t" id="share" style="left:908px;top:92.13px;font-size:13.2px;line-height:13.2px;color:#001d35;-webkit-text-stroke:0.45px #001d35;">Настройки Доступа</div>
<div class="a t" id="go" style="left:1100.5px;top:91.93px;font-size:13.2px;line-height:13.2px;color:#0b57d0;-webkit-text-stroke:0.45px #0b57d0;">Перейти</div>
<div class="a t" id="zoom" style="left:374px;top:142.97px;font-size:12.2px;line-height:12.2px;color:#444746;">100%</div>
<div class="a t" id="style" style="left:452px;top:141.76px;font-size:12.8px;line-height:12.8px;color:#444746;">Обычный ...</div>
<div class="a t" id="font" style="left:570.4px;top:141.76px;font-size:12.8px;line-height:12.8px;color:#444746;">Arial</div>
<div class="a t" id="tabs" style="left:207.4px;top:254.16px;font-size:12.8px;line-height:12.8px;color:#444746;-webkit-text-stroke:0.25px #444746;">Вкладки в документе</div>
<div class="a t" id="tabname" style="left:238.7px;top:294.10px;font-size:13px;line-height:13px;color:#1f1f1f;-webkit-text-stroke:0.45px #1f1f1f;">1000+ High-Impact ...</div>
<div class="a t" id="si0" style="left:241.4px;top:327.63px;font-size:13.2px;line-height:13.2px;color:#0b57d0;">Table of Contents</div>
<div class="a t" id="si1" style="left:241.4px;top:360.07px;font-size:13.2px;line-height:13.2px;color:#444746;">Marketing Strategy</div>
<div class="a t" id="si2" style="left:241.4px;top:392.51px;font-size:13.2px;line-height:13.2px;color:#444746;">Brand Strategy</div>
<div class="a t" id="si3" style="left:241.4px;top:424.95px;font-size:13.2px;line-height:13.2px;color:#444746;">Copywriting</div>
<div class="a t" id="si4" style="left:241.4px;top:457.39px;font-size:13.2px;line-height:13.2px;color:#444746;">Social Media Strategy</div>
<div class="a t" id="si5" style="left:241.4px;top:489.83px;font-size:13.2px;line-height:13.2px;color:#444746;">Brand Identity</div>
<div class="a t" id="si6" style="left:241.4px;top:522.27px;font-size:13.2px;line-height:13.2px;color:#444746;">Brand Analysis</div>
<div class="a t" id="si7" style="left:241.4px;top:554.71px;font-size:13.2px;line-height:13.2px;color:#444746;">Competitor Analysis</div>
<div class="a t" id="si8" style="left:241.4px;top:587.15px;font-size:13.2px;line-height:13.2px;color:#444746;">Market Analysis</div>
<div class="a t" id="si9" style="left:241.4px;top:619.59px;font-size:13.2px;line-height:13.2px;color:#444746;">SEO</div>
<div class="a t" id="si10" style="left:241.4px;top:652.03px;font-size:13.2px;line-height:13.2px;color:#444746;">Paid Search</div>
<div class="a t" id="si11" style="left:241.4px;top:684.47px;font-size:13.2px;line-height:13.2px;color:#444746;">Paid Advertising (Google...</div>
<div class="a t" id="si12" style="left:241.4px;top:716.91px;font-size:13.2px;line-height:13.2px;color:#444746;">Influencer Strategy</div>
<div class="a t" id="si13" style="left:241.4px;top:749.35px;font-size:13.2px;line-height:13.2px;color:#444746;">Brand Visual Creation</div>
<div class="a t" id="si14" style="left:241.4px;top:781.79px;font-size:13.2px;line-height:13.2px;color:#444746;">Brand Pricing Strategy</div>
<div class="a t" id="si15" style="left:241.4px;top:814.23px;font-size:13.2px;line-height:13.2px;color:#444746;">Brand Distribution Strate...</div>
<div class="a t" id="si16" style="left:241.4px;top:845.47px;font-size:13.2px;line-height:13.2px;color:#444746;">Brand Sales Strategy</div>

<!-- logos -->
<div class="a" id="hub" style="left:721px;top:248px;font-size:17px;line-height:17px;font-weight:bold;color:#2d3e50;transform-origin:0 0;transform:scaleX(0.85)">HubSp</div>
<div class="a" id="hubt" style="left:780px;top:248px;font-size:17px;line-height:17px;font-weight:bold;color:#2d3e50">t</div>
<svg class="a" style="left:760px;top:245px" width="20" height="21" viewBox="760 245 20 21">
  <circle cx="773.3" cy="256.6" r="4.1" fill="none" stroke="#ff5c35" stroke-width="2.1"/>
  <path d="M773.5 252.5V249" stroke="#ff5c35" stroke-width="1.7"/><circle cx="773.6" cy="248.4" r="1.7" fill="#ff5c35"/>
  <path d="M770.5 253.8L763.5 248.5" stroke="#ff5c35" stroke-width="1.5"/><circle cx="763" cy="248.1" r="1.5" fill="#ff5c35"/>
  <path d="M770.6 259.6L768 262.8" stroke="#ff5c35" stroke-width="1.5"/><circle cx="767.8" cy="263.1" r="1.5" fill="#ff5c35"/>
</svg>
<div class="a" style="left:791px;top:247px;width:1px;height:16px;background:#e3e5e8"></div>
<svg class="a" style="left:799.5px;top:247.5px" width="14.5" height="15.5" viewBox="0 0 14.5 15.5">
  <path d="M0.5 0.5L5 3.5 7.25 6 9.5 3.5 14 0.5V15L9.5 12 7.25 9.5 5 12 0.5 15z" fill="#ff3cac"/>
  <path d="M4 5.5L7.25 9 10.5 5.5V9.5L7.25 12.5 4 9.5z" fill="#fff" opacity="0.9"/>
</svg>
<div class="a t" id="mind" style="left:819.2px;top:249.40px;font-size:13px;line-height:13px;color:#4b3b8f;font-weight:bold;">Mindstream</div>
<div class="a t" id="h1_0" style="left:525.4px;top:292.94px;font-size:31.5px;line-height:31.5px;color:#000;font-weight:bold;">1000+ High-Impact Marketing</div>
<div class="a t" id="h1_1" style="left:525.4px;top:332.64px;font-size:31.5px;line-height:31.5px;color:#000;font-weight:bold;">Prompts: Automate, Scale &amp;</div>
<div class="a t" id="h1_2" style="left:525.4px;top:370.24px;font-size:31.5px;line-height:31.5px;color:#000;font-weight:bold;">Optimize</div>
<div class="a t" id="p_0" style="left:524.4px;top:421.80px;font-size:13px;line-height:13px;color:#000;">This is your comprehensive resource designed to help marketers streamline their</div>
<div class="a t" id="p_1" style="left:524.4px;top:440.50px;font-size:13px;line-height:13px;color:#000;">strategies, enhance creativity, and optimize execution using structured AI-generated</div>
<div class="a t" id="p_2" style="left:524.4px;top:459.20px;font-size:13px;line-height:13px;color:#000;">prompts. The prompts guide users in content creation, campaign planning, audience</div>
<div class="a t" id="p_3" style="left:524.4px;top:477.90px;font-size:13px;line-height:13px;color:#000;">targeting, and workflow automation—making AI-powered marketing more actionable</div>
<div class="a t" id="p_4" style="left:524.4px;top:496.60px;font-size:13px;line-height:13px;color:#000;">and effective.</div>
<div class="a t" id="h2" style="left:524.4px;top:540.92px;font-size:24.9px;line-height:24.9px;color:#000;font-weight:bold;">Table of Contents</div>
<div class="a t" id="toc_0" style="left:524.3px;top:581.90px;font-size:13px;line-height:13px;color:#1155cc;text-decoration:underline;">Marketing Strategy</div>
<div class="a" style="right:316px;top:581.90px;font-size:13px;line-height:13px;color:#000">2</div>
<div class="a t" id="toc_1" style="left:524.3px;top:601.90px;font-size:13px;line-height:13px;color:#1155cc;text-decoration:underline;">Brand Strategy</div>
<div class="a" style="right:316px;top:601.90px;font-size:13px;line-height:13px;color:#000">7</div>
<div class="a t" id="toc_2" style="left:524.3px;top:621.90px;font-size:13px;line-height:13px;color:#1155cc;text-decoration:underline;">Copywriting</div>
<div class="a" style="right:316px;top:621.90px;font-size:13px;line-height:13px;color:#000">11</div>
<div class="a t" id="toc_3" style="left:524.3px;top:641.90px;font-size:13px;line-height:13px;color:#1155cc;text-decoration:underline;">Social Media Strategy</div>
<div class="a" style="right:316px;top:641.90px;font-size:13px;line-height:13px;color:#000">16</div>
<div class="a t" id="toc_4" style="left:524.3px;top:661.90px;font-size:13px;line-height:13px;color:#1155cc;text-decoration:underline;">Brand Identity</div>
<div class="a" style="right:316px;top:661.90px;font-size:13px;line-height:13px;color:#000">20</div>
<div class="a t" id="toc_5" style="left:524.3px;top:681.90px;font-size:13px;line-height:13px;color:#1155cc;text-decoration:underline;">Brand Analysis</div>
<div class="a" style="right:316px;top:681.90px;font-size:13px;line-height:13px;color:#000">25</div>
<div class="a t" id="toc_6" style="left:524.3px;top:701.90px;font-size:13px;line-height:13px;color:#1155cc;text-decoration:underline;">Competitor Analysis</div>
<div class="a" style="right:316px;top:701.90px;font-size:13px;line-height:13px;color:#000">30</div>
<div class="a t" id="toc_7" style="left:524.3px;top:721.90px;font-size:13px;line-height:13px;color:#1155cc;text-decoration:underline;">Market Analysis</div>
<div class="a" style="right:316px;top:721.90px;font-size:13px;line-height:13px;color:#000">36</div>
<div class="a t" id="toc_8" style="left:524.3px;top:741.90px;font-size:13px;line-height:13px;color:#1155cc;text-decoration:underline;">SEO</div>
<div class="a" style="right:316px;top:741.90px;font-size:13px;line-height:13px;color:#000">41</div>
<div class="a t" id="toc_9" style="left:524.3px;top:761.90px;font-size:13px;line-height:13px;color:#1155cc;text-decoration:underline;">Paid Search</div>
<div class="a" style="right:316px;top:761.90px;font-size:13px;line-height:13px;color:#000">45</div>
<div class="a t" id="toc_10" style="left:524.3px;top:781.90px;font-size:13px;line-height:13px;color:#1155cc;text-decoration:underline;">Paid Advertising</div>
<div class="a" style="right:316px;top:781.90px;font-size:13px;line-height:13px;color:#000">49</div>
<div class="a t" id="toc_11" style="left:524.3px;top:801.90px;font-size:13px;line-height:13px;color:#1155cc;text-decoration:underline;">Influencer Strategy</div>
<div class="a" style="right:316px;top:801.90px;font-size:13px;line-height:13px;color:#000">54</div>
<div class="a t" id="toc_12" style="left:524.3px;top:821.90px;font-size:13px;line-height:13px;color:#1155cc;text-decoration:underline;">Brand Visual Creation</div>
<div class="a" style="right:316px;top:821.90px;font-size:13px;line-height:13px;color:#000">58</div>
<div class="a t" id="toc_13" style="left:524.3px;top:841.90px;font-size:13px;line-height:13px;color:#1155cc;text-decoration:underline;">Brand Pricing Strategy</div>
<div class="a" style="right:316px;top:841.90px;font-size:13px;line-height:13px;color:#000">61</div>
<div class="a t" id="toc_14" style="left:524.3px;top:861.90px;font-size:13px;line-height:13px;color:#1155cc;text-decoration:underline;">Brand Distribution Strategy</div>
<div class="a" style="right:316px;top:861.90px;font-size:13px;line-height:13px;color:#000">66</div>
</div></div>
</body></html>
